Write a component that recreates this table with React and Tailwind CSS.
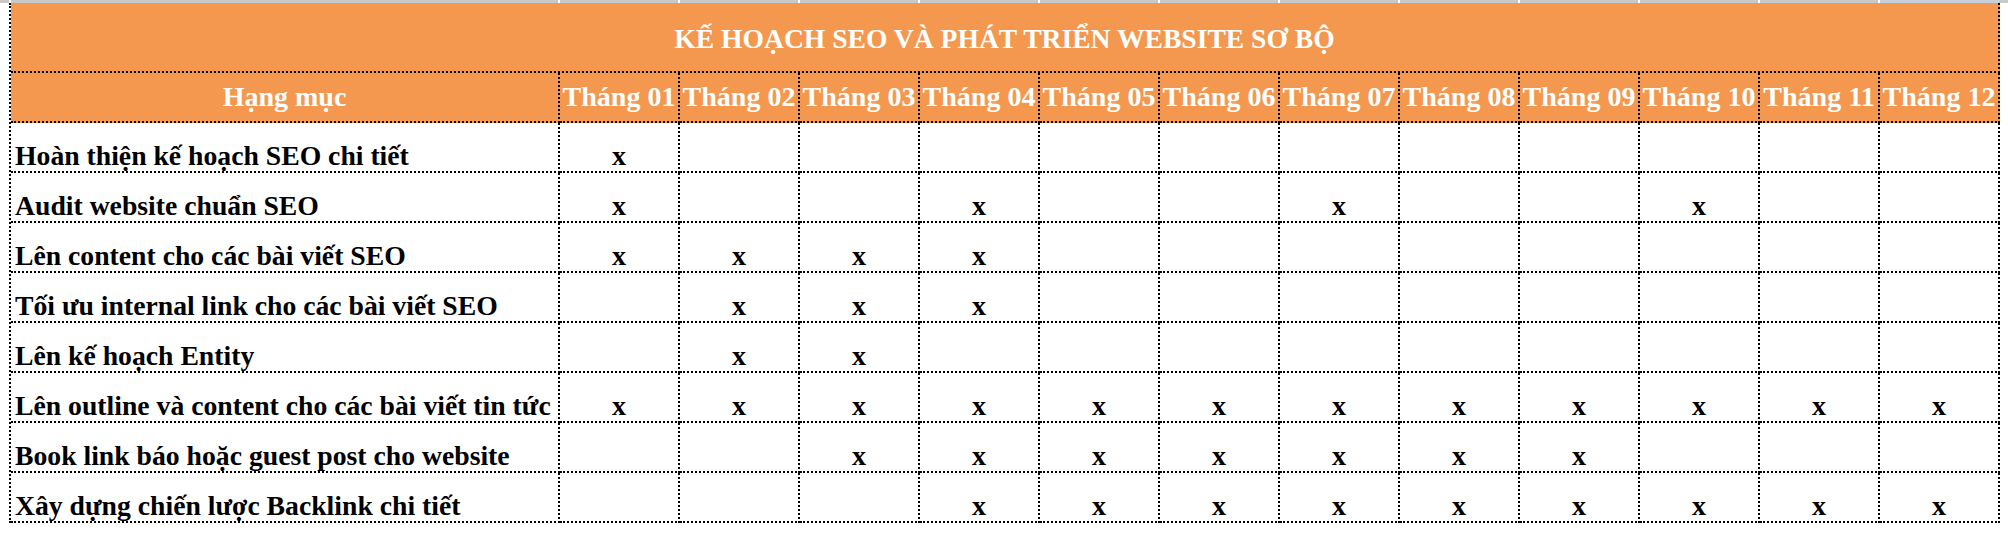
import React from "react";

const months = ["01","02","03","04","05","06","07","08","09","10","11","12"];

const rows = [
  ["Hoàn thiện kế hoạch SEO chi tiết", [1]],
  ["Audit website chuẩn SEO", [1, 4, 7, 10]],
  ["Lên content cho các bài viết SEO", [1, 2, 3, 4]],
  ["Tối ưu internal link cho các bài viết SEO", [2, 3, 4]],
  ["Lên kế hoạch Entity", [2, 3]],
  ["Lên outline và content cho các bài viết tin tức", [1,2,3,4,5,6,7,8,9,10,11,12]],
  ["Book link báo hoặc guest post cho website", [3,4,5,6,7,8,9]],
  ["Xây dựng chiến lược Backlink chi tiết", [4,5,6,7,8,9,10,11,12]],
];

const font = { fontFamily: '"Liberation Serif", "Times New Roman", serif' };

export default function App() {
  return (
    <div className="w-[2008px] h-[534px] bg-white overflow-hidden" style={font}>
      {/* spreadsheet gridline strip above */}
      <div className="flex h-[3px] bg-[#c8c8c8]">
        <div className="w-[9px] shrink-0 bg-[#c8c8c8]" />
        <div className="w-[551px] shrink-0 border-l-2 border-r-2 border-white bg-[#c8c8c8]" />
        {months.slice(0, 11).map((m) => (
          <div key={m} className="w-[120px] shrink-0 border-r-2 border-white bg-[#c8c8c8]" />
        ))}
        <div className="w-[120px] shrink-0 bg-[#c7cfda]" />
        <div className="flex-1 bg-[#c8c8c8]" />
      </div>

      <div className="pl-[9px]">
        <div className="w-[1991px] border-l-2 border-dotted border-black">
          {/* title */}
          <div className="h-[70px] bg-[#f4984f] border-r-2 border-b-2 border-dotted border-black flex items-center justify-center pt-[4px]">
            <span className="text-white font-bold text-[27.6px] leading-none">
              KẾ HOẠCH SEO VÀ PHÁT TRIỂN WEBSITE SƠ BỘ
            </span>
          </div>

          {/* header row */}
          <div className="grid grid-cols-[549px_repeat(12,120px)] h-[50px] bg-[#f4984f]">
            <div className="border-r-2 border-b-2 border-dotted border-black flex items-center justify-center">
              <span className="text-white font-bold text-[28px] leading-none">Hạng mục</span>
            </div>
            {months.map((m) => (
              <div
                key={m}
                className="border-r-2 border-b-2 border-dotted border-black flex items-center justify-center whitespace-nowrap"
              >
                <span className="text-white font-bold text-[28px] leading-none">Tháng {m}</span>
              </div>
            ))}
          </div>

          {/* data rows */}
          {rows.map(([label, marks]) => (
            <div key={label} className="grid grid-cols-[549px_repeat(12,120px)] h-[50px]">
              <div className="border-r-2 border-b-2 border-dotted border-black flex items-end pl-[4px] pb-[1px] whitespace-nowrap">
                <span className="text-black font-bold text-[27.7px] leading-none">{label}</span>
              </div>
              {months.map((m, i) => (
                <div
                  key={m}
                  className="border-r-2 border-b-2 border-dotted border-black flex items-end justify-center pb-[1px]"
                >
                  {marks.includes(i + 1) ? (
                    <span className="text-black font-bold text-[28px] leading-none">x</span>
                  ) : null}
                </div>
              ))}
            </div>
          ))}
        </div>
      </div>
    </div>
  );
}
